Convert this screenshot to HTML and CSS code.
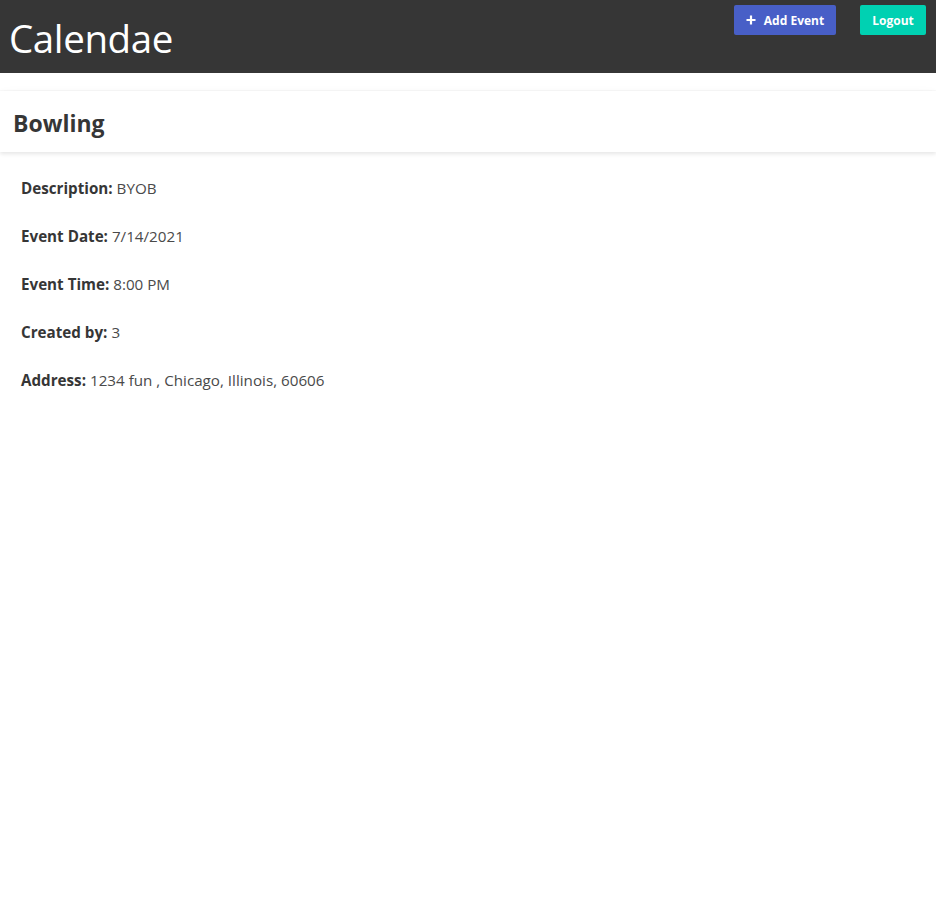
FILE: index.html
```html
<!DOCTYPE html>
<html>
<head>
<meta charset="utf-8">
<link rel="stylesheet" href="styles.css">
</head>
<body>
<header class="topbar">
  <h1 class="brand">Calendae</h1>
  <div class="actions">
    <button class="btn btn-add"><svg class="plus" viewBox="0 0 10 10" width="10" height="10"><path d="M5 0.5v9M0.5 5h9" stroke="#fff" stroke-width="2.2"/></svg>Add Event</button>
    <button class="btn btn-logout">Logout</button>
  </div>
</header>
<main class="main">
  <div class="card">
    <div class="card-header"><h2 class="card-title">Bowling</h2></div>
    <div class="card-content">
      <p><strong>Description:</strong> BYOB</p>
      <p><strong>Event Date:</strong> 7/14/2021</p>
      <p><strong>Event Time:</strong> 8:00 PM</p>
      <p><strong>Created by:</strong> 3</p>
      <p><strong>Address:</strong> 1234 fun , Chicago, Illinois, 60606</p>
    </div>
  </div>
</main>
</body>
</html>
```
FILE: styles.css
```css
* { box-sizing: border-box; }
body {
  margin: 0;
  font-family: "Open Sans", "Noto Sans", sans-serif;
  color: #4a4a4a;
  background: #fff;
}
.topbar {
  background: #363636;
  height: 73px;
  display: flex;
  justify-content: space-between;
  align-items: flex-start;
  padding: 0 10px 0 9px;
}
.brand {
  margin: 0;
  color: #fff;
  font-weight: 400;
  font-size: 38.5px;
  line-height: 76px;
  letter-spacing: -0.4px;
}
.actions {
  display: flex;
  gap: 24px;
  padding-top: 5px;
}
.btn {
  border: none;
  border-radius: 2px;
  height: 30px;
  color: #fff;
  font-family: inherit;
  font-weight: 700;
  font-size: 12px;
  display: flex;
  align-items: center;
  justify-content: center;
  cursor: pointer;
}
.btn-add { background: #485fc7; width: 102px; gap: 8px; }
.btn-logout { background: #00d1b2; width: 66px; }
.plus { display: block; }
.main { padding-top: 18px; }
.card {
  background: #fff;
  box-shadow: 0 8px 16px -2px rgba(10,10,10,0.12), 0 0 0 1px rgba(10,10,10,0.02);
}
.card-header {
  box-shadow: 0 2px 4px rgba(10,10,10,0.1);
  height: 61px;
  display: flex;
  align-items: center;
  padding: 3px 13px 0;
}
.card-title {
  margin: 0;
  font-size: 23px;
  font-weight: 700;
  color: #363636;
}
.card-content {
  padding: 24px 21px 23px;
}
.card-content p {
  margin: 0 0 24px;
  font-size: 15.2px;
  line-height: 24px;
}
.card-content p:last-child { margin-bottom: 0; }
.card-content strong { color: #363636; }
```
